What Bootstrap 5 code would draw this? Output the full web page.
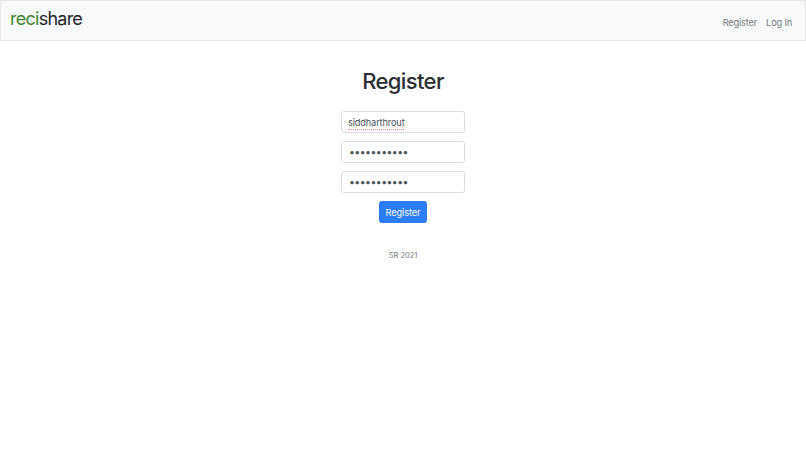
<!DOCTYPE html>
<html lang="en">
<head>
<meta charset="utf-8">
<title>recishare</title>
<link href="https://cdn.jsdelivr.net/npm/bootstrap@5.3.0/dist/css/bootstrap.min.css" rel="stylesheet">
<style>
html, body { font-family: Inter, "Liberation Sans", sans-serif; background: #fff; }
.top-bar { height: 41px; border: 1px solid #e4e6e8; padding: 0 9px; align-items: flex-start; }
.logo-text { font-size: 18px; line-height: 22px; margin-top: 7px; color: #212529; letter-spacing: -.75px; padding: 0; margin-right: 0; }
.logo-green { color: #3f8a2e; }
.top-links { margin-top: 14px; gap: 9px; padding-right: 4px; }
.top-links a { color: #76797d; text-decoration: none; font-size: 9.25px; line-height: 16px; padding: 0; letter-spacing: -.18px; }
.page-title { font-size: 22px; font-weight: 500; line-height: 28px; margin: 26px 0 16px; color: #2b2f33; text-align: center; letter-spacing: -.62px; }
.reg-form { width: 124px; }
.field-wrap { width: 100%; margin-bottom: 8px; }
.reg-form .form-control { height: 22px; font-size: 9.25px; padding: 0 6px; border-radius: 2.5px; color: #495057; border-color: #dcdfe2; letter-spacing: -.16px; }
.reg-form .pw-field { font-size: 10.5px; letter-spacing: -.55px; color: #50555a; padding-left: 7px; }
.spell-mark { position: absolute; left: 7px; bottom: 3px; width: 56px; border-bottom: 1px dotted #e58a8a; }
.reg-btn { font-size: 9.25px; height: 22px; width: 48px; padding: 1px 0 0; border-radius: 2.5px; line-height: 19px; background: #2b7cf6; border-color: #2b7cf6; letter-spacing: -.1px; }
.foot-note { font-size: 7.5px; color: #76797d; margin-top: 27px; line-height: 12px; letter-spacing: -.05px; }
</style>
</head>
<body>
<nav class="navbar top-bar bg-light d-flex justify-content-between flex-nowrap">
  <a class="navbar-brand logo-text" href="#"><span class="logo-green">reci</span>share</a>
  <div class="top-links d-flex">
    <a href="#">Register</a>
    <a href="#">Log In</a>
  </div>
</nav>
<main class="d-flex flex-column align-items-center">
  <h1 class="page-title">Register</h1>
  <form class="reg-form d-flex flex-column align-items-center">
    <div class="field-wrap position-relative">
      <input class="form-control" type="text" value="siddharthrout">
      <span class="spell-mark"></span>
    </div>
    <div class="field-wrap"><input class="form-control pw-field" type="password" value="12345678901"></div>
    <div class="field-wrap"><input class="form-control pw-field" type="password" value="12345678901"></div>
    <button class="btn btn-primary reg-btn" type="button">Register</button>
  </form>
  <p class="foot-note mb-0">SR 2021</p>
</main>
<script src="https://cdn.jsdelivr.net/npm/bootstrap@5.3.0/dist/js/bootstrap.bundle.min.js"></script>
</body>
</html>
